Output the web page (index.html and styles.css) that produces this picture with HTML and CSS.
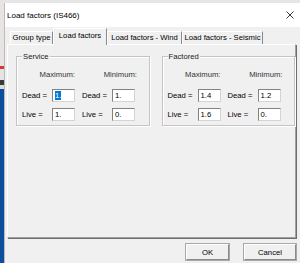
FILE: index.html
```html
<!DOCTYPE html>
<html lang="en">
<head>
    <meta charset="UTF-8">
    <title>Load factors (IS466)</title>
    <link rel="stylesheet" href="styles.css">
</head>
<body>
    <div class="desk">
        <div class="strip"></div>
        <div class="dialog">
            <div class="titlebar">
                <span class="title">Load factors (IS466)</span>
                <svg class="close" width="8" height="8" viewBox="0 0 8 8">
                    <path d="M0.5 0.5 L7.5 7.5 M7.5 0.5 L0.5 7.5" stroke="#222" stroke-width="0.9" fill="none"/>
                </svg>
            </div>
            <div class="client">
                <div class="tabs">
                    <div class="tab t1">Group type</div>
                    <div class="tab t2 active">Load factors</div>
                    <div class="tab t3">Load factors - Wind</div>
                    <div class="tab t4">Load factors - Seismic</div>
                </div>
                <div class="panel">
                    <div class="group">
                        <span class="legend">Service</span>
                        <div class="grid">
                            <span class="head max">Maximum:</span>
                            <span class="head min">Minimum:</span>
                            <span class="lbl">Dead =</span>
                            <div class="field"><span class="sel">1.</span></div>
                            <span class="lbl right">Dead =</span>
                            <div class="field">1.</div>
                            <span class="lbl">Live =</span>
                            <div class="field">1.</div>
                            <span class="lbl right">Live =</span>
                            <div class="field">0.</div>
                        </div>
                    </div>
                    <div class="group">
                        <span class="legend">Factored</span>
                        <div class="grid">
                            <span class="head max">Maximum:</span>
                            <span class="head min">Minimum:</span>
                            <span class="lbl">Dead =</span>
                            <div class="field">1.4</div>
                            <span class="lbl right">Dead =</span>
                            <div class="field">1.2</div>
                            <span class="lbl">Live =</span>
                            <div class="field">1.6</div>
                            <span class="lbl right">Live =</span>
                            <div class="field">0.</div>
                        </div>
                    </div>
                </div>
                <div class="buttons">
                    <button class="btn ok">OK</button>
                    <button class="btn cancel">Cancel</button>
                </div>
            </div>
        </div>
    </div>
</body>
</html>
```

FILE: styles.css
```css
html, body {
    margin: 0;
    padding: 0;
    width: 300px;
    height: 263px;
    overflow: hidden;
}

body {
    background-color: #e6e6e6;
    font-family: "Liberation Sans", Arial, sans-serif;
    font-size: 7.7px;
    color: #000;
}

.desk {
    display: flex;
    height: 263px;
}

.strip {
    width: 4px;
    flex-shrink: 0;
    background: linear-gradient(to bottom,
        #e8e4e4 0, #e8e4e4 66px,
        #d23a3a 66px, #d23a3a 69px,
        #e4e4e4 69px, #e4e4e4 80px,
        #3a3a3a 80px, #3a3a3a 85px,
        #dcdcdc 85px, #dcdcdc 89px,
        #0d4f9f 89px, #0d4f9f 100%);
}

.dialog {
    margin-top: 3px;
    width: 295px;
    border-left: 1px solid #bcbcbc;
    background-color: #f0f0f0;
    display: flex;
    flex-direction: column;
}

.titlebar {
    height: 24px;
    background-color: #fff;
    display: flex;
    align-items: center;
    justify-content: space-between;
    padding: 0 6px 0 2px;
}

.title {
    font-size: 8px;
    padding-top: 1px;
}

.close {
    display: block;
    margin-top: -1px;
}

.client {
    padding: 2px 4px 0 2px;
}

.tabs {
    display: flex;
    align-items: flex-end;
    height: 16px;
    padding-left: 3px;
    margin-bottom: -1px;
    position: relative;
    z-index: 1;
}

.tab {
    height: 12px;
    line-height: 12px;
    text-align: center;
    background-color: #f0f0f0;
    border-top: 1px solid #fff;
    border-left: 1px solid #fff;
    border-right: 1px solid #8a8a8a;
    margin-bottom: 1px;
    box-sizing: content-box;
    white-space: nowrap;
}

.tab.active {
    height: 16px;
    line-height: 14px;
    margin-bottom: 0;
}

.t1 { width: 41px; }
.t2 { width: 52px; }
.t3 { width: 73px; }
.t4 { width: 79px; }

.panel {
    height: 181px;
    border-top: 1px solid #fff;
    border-left: 1px solid #fff;
    border-right: 1px solid #a0a0a0;
    border-bottom: 1px solid #a0a0a0;
    box-shadow: 1px 1px 0 #6d6d6d;
    padding: 11px 0 0 8px;
    display: flex;
    align-items: flex-start;
    gap: 12px;
}

.group {
    width: 127px;
    border: 1px solid #c4c4c4;
    box-shadow: inset 1px 1px 0 #fff, 1px 1px 0 #fff;
    position: relative;
    padding: 13px 0 4px 5px;
}

.legend {
    position: absolute;
    top: -5px;
    left: 5px;
    padding: 0 1px;
    line-height: 9px;
    background-color: #f0f0f0;
    color: #222;
}

.grid {
    display: grid;
    grid-template-columns: 30px 23px 7px 30px 23px;
    grid-template-rows: 13px 13px 13px;
    row-gap: 6px;
}

.head {
    line-height: 10px;
    text-align: right;
    color: #333;
}

.head.max {
    grid-column: 1 / 3;
}

.head.min {
    grid-column: 4 / 6;
    margin-right: -2px;
}

.lbl {
    line-height: 13px;
    grid-column: 1;
}

.lbl.right {
    grid-column: 4;
}

.field {
    background-color: #fff;
    border: 1px solid;
    border-color: #828282 #d4d4d4 #d4d4d4 #828282;
    line-height: 11px;
    padding-left: 2px;
    overflow: hidden;
    white-space: nowrap;
}

.sel {
    background-color: #0078d7;
    color: #fff;
    display: inline-block;
    line-height: 9px;
    margin-top: 1px;
}

.buttons {
    display: flex;
    justify-content: flex-end;
    gap: 15px;
    margin-top: 6px;
}

.btn {
    font-family: inherit;
    font-size: 7.7px;
    color: #000;
    height: 16px;
    padding: 0;
    background-color: #f0f0f0;
    border-top: 1px solid #fff;
    border-left: 1px solid #fff;
    border-right: 1px solid #8a8a8a;
    border-bottom: 1px solid #8a8a8a;
    box-shadow: 0 0 0 1px #a8a8a8;
}

.ok {
    width: 43px;
}

.cancel {
    width: 52px;
}
```
